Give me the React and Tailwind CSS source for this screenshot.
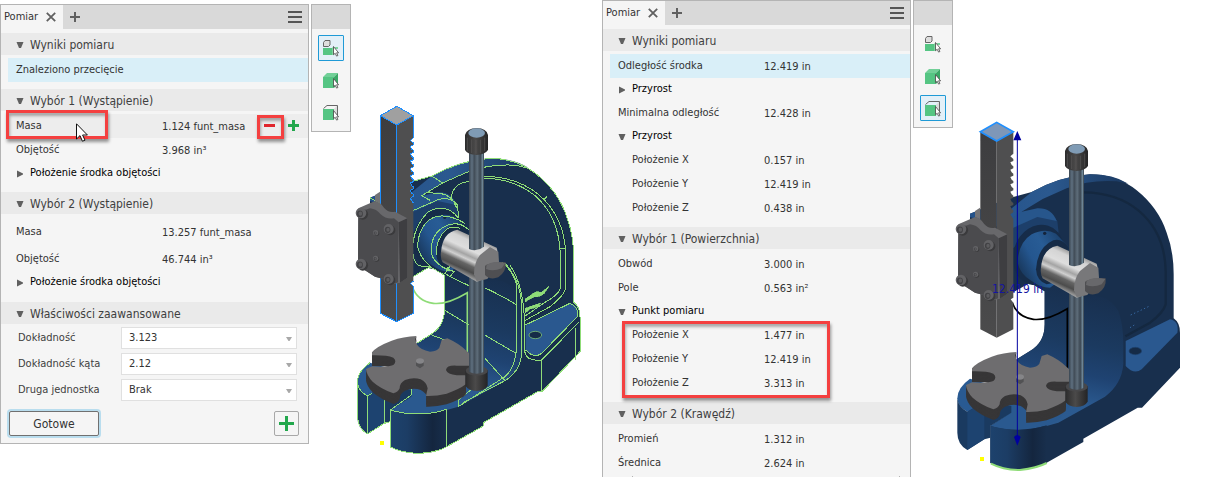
import clsx from 'clsx'

const EDGE = '#8fdc78'
const SELECT = '#1e8fff'

function Arrow({ open = true }) {
  return (
    <svg viewBox="0 0 8 8" className="h-2 w-2 shrink-0 fill-[#606060]" aria-hidden="true">
      <path d={open ? 'M0.5 1h7L5 7H3z' : 'M1 0.5L7 3.5v1L1 7.5z'} />
    </svg>
  )
}

function TabBar() {
  return (
    <div className="flex h-6 items-stretch bg-[#d9d9d9] text-[#333]">
      <div className="flex w-[62px] items-center justify-between bg-[#f5f5f5] pr-[7px] pl-[3px]">
        <button type="button" className="text-[11px]">Pomiar</button>
        <button type="button" aria-label="Zamknij">
          <svg viewBox="0 0 10 10" className="h-[10px] w-[10px] stroke-[#606060]" strokeWidth="1.8">
            <path d="M0.8 0.8l8.4 8.4M9.2 0.8L0.8 9.2" />
          </svg>
        </button>
      </div>
      <button type="button" aria-label="Dodaj" className="px-[7px]">
        <svg viewBox="0 0 10 10" className="h-[10px] w-[10px] fill-[#606060]">
          <path d="M4 0h2v4h4v2H6v4H4V6H0V4h4z" />
        </svg>
      </button>
      <button type="button" aria-label="Menu" className="ml-auto px-[6px]">
        <svg viewBox="0 0 14 12" className="h-3 w-[14px] fill-[#555]">
          <path d="M0 0h14v2H0zM0 5h14v2H0zM0 10h14v2H0z" />
        </svg>
      </button>
    </div>
  )
}

function Section({ title, className, children }) {
  return (
    <section>
      <h2>
        <button type="button" className="flex h-[22px] w-full items-center gap-[6px] bg-[#eaeaea] pt-[2px] pl-[15px] text-[12px] text-[#404040]">
          <Arrow />
          {title}
        </button>
      </h2>
      <div className={clsx('pt-[3px]', className)}>{children}</div>
    </section>
  )
}

function Row({ label, value, indent, className, children }) {
  return (
    <dl className={clsx('relative ml-[7px] flex h-6 items-center pl-2 text-[11px] text-[#333]', className)}>
      <dt className={clsx('w-[146px] shrink-0', indent && 'pl-[14px]')}>{label}</dt>
      <dd className="pt-[2px]">{value}</dd>
      {children}
    </dl>
  )
}

function Group({ label, open = false }) {
  return (
    <button type="button" aria-expanded={open} className="flex h-[23px] items-center gap-[6px] pl-[15px] text-[11px] text-black">
      <Arrow open={open} />
      {label}
    </button>
  )
}

function Field({ id, label, value }) {
  return (
    <div className="flex items-center pr-[11px] pl-[17px] text-[11px] text-[#404040]">
      <label htmlFor={id} className="w-[103px] shrink-0">{label}</label>
      <div className="relative flex-1">
        <select id={id} defaultValue={value} className="block h-[22px] w-full appearance-none border border-[#e0e0e0] bg-white px-[7px] text-[#333]">
          <option>{value}</option>
        </select>
        <svg viewBox="0 0 6 4" className="pointer-events-none absolute top-[10px] right-[5px] h-1 w-[6px] fill-[#a8a8a8]" aria-hidden="true">
          <path d="M0 0h6L3.5 4h-1z" />
        </svg>
      </div>
    </div>
  )
}

function Callout({ className }) {
  return <div className={clsx('pointer-events-none absolute border-[3px] border-[#f44040] shadow-[1px_3px_3px_rgba(0,0,0,0.4),inset_1px_3px_3px_rgba(0,0,0,0.3)]', className)} />
}

function PickCursor() {
  return <path d="M11.5 6.5v8.2l1.7-1.4 1.4 2.8 1.3-.6-1.3-2.7h2z" fill="#fff" stroke="#444" strokeWidth="0.8" />
}

function ComponentIcon() {
  return (
    <svg viewBox="1 0 17 17" className="h-[17px] w-[17px]">
      <path d="M1 8h9v7H1z" fill="#55c583" />
      <path d="M10 8l1-1h1v8h-2zM13 7h3v2h-3z" fill="#7fd3a0" />
      <path d="M1.5 6.5v-4l1.5-2h5v4.500l-1.500 1.500z" fill="#dedede" stroke="#666" />
      <PickCursor />
    </svg>
  )
}

function BodyIcon() {
  return (
    <svg viewBox="1 0 17 17" className="h-[17px] w-[17px]">
      <path d="M1 5h11v11H1z" fill="#55c583" />
      <path d="M1 5l4-4h11l-4 4z" fill="#72d098" />
      <path d="M12 5l4-4v10l-4 5z" fill="#3aa866" />
      <PickCursor />
    </svg>
  )
}

function FaceIcon() {
  return (
    <svg viewBox="1 0 17 17" className="h-[17px] w-[17px]">
      <path d="M12 5l3.500-4v10L12 15z" fill="#ddd" />
      <path d="M1.500 4.500l3.500-3h10.500v10" fill="none" stroke="#666" />
      <path d="M1 5h11v11H1z" fill="#55c583" />
      <PickCursor />
    </svg>
  )
}

const TOOLS = [
  { name: 'Komponent', Icon: ComponentIcon },
  { name: 'Bryła', Icon: BodyIcon },
  { name: 'Powierzchnia', Icon: FaceIcon },
]

function Toolbar({ active }) {
  return (
    <div className="ml-[2px] w-10 shrink-0 border border-[#b4b4b4] bg-[#f5f5f5]">
      <div className="h-6 bg-[#d9d9d9]" />
      <div className="flex flex-col items-center gap-[6px] py-[6px]">
        {TOOLS.map(({ name, Icon }, i) => (
          <button
            key={name}
            type="button"
            aria-label={name}
            aria-pressed={i === active}
            className={clsx(
              'flex h-[26px] w-[26px] items-center justify-center border',
              i === active ? 'rounded-[1px] border-[#1f9ad6] bg-[#e3f0f8]' : 'border-transparent'
            )}
          >
            <Icon />
          </button>
        ))}
      </div>
    </div>
  )
}

const TABLE = 'M66 772Q78 755 125 737Q160 725 200 723L195 731L200 748Q212 766 240 770Q262 768 268 758L275 735L292 730Q328 746 350 768L358 775V812H320Q290 810 288 825Q292 838 320 841H347V868Q330 882 290 896Q258 904 228 903L233 880Q230 862 212 853Q190 845 165 855Q149 864 149 880Q144 892 130 895Q90 880 68 860Q50 842 48 822L66 814Q110 818 130 810Q142 798 130 788Q110 780 66 781Z'
const TEETH = 'M190 62V128L181 136L190 144V150L181 154L185 162L190 166V172L181 176L185 184L190 188V194L181 198L185 206L190 210V216L181 220L185 228L190 232V238L181 242L185 250L190 254V260L181 264L185 272L190 276V282L181 286L185 294L190 298V304L181 310L190 324'

function Screw({ x, y, r }) {
  return (
    <g>
      <ellipse cx={x + r / 3} cy={y + r / 4} rx={r} ry={r} fill="#3a3a3c" />
      <ellipse cx={x} cy={y} rx={r} ry={r} fill="#626265" />
      <ellipse cx={x - r / 5} cy={y + r / 6} rx={r / 1.8} ry={r / 1.6} fill="#424245" />
      <ellipse cx={x - r / 8} cy={y + r / 8} rx={r / 3} ry={r / 2.5} fill="#5c5c5f" />
    </g>
  )
}

// Arbor press. Units are thirds of a pixel.
function Press({ id, originX, edges, measure }) {
  const fill = (name) => `url(#${id}-${name})`
  return (
    <svg viewBox={`${originX} 0 720 1080`} className="h-[360px] w-60 shrink-0" role="img" aria-label="Prasa ręczna">
      <defs>
        <linearGradient id={`${id}-post`}>
          <stop offset="0" stopColor="#3a4651" />
          <stop offset="0.2" stopColor="#5f7080" />
          <stop offset="0.35" stopColor="#414c57" />
          <stop offset="0.55" stopColor="#5e6d7a" />
          <stop offset="0.75" stopColor="#3b4651" />
          <stop offset="0.9" stopColor="#6c8494" />
          <stop offset="1" stopColor="#323c46" />
        </linearGradient>
        <linearGradient id={`${id}-knob`}>
          <stop offset="0" stopColor="#2b2b2c" />
          <stop offset="0.45" stopColor="#4b4a4a" />
          <stop offset="1" stopColor="#242425" />
        </linearGradient>
        <linearGradient id={`${id}-steel`} x1="0.65" y1="0.1" x2="0.25" y2="0.9">
          <stop offset="0.05" stopColor="#8d8d8d" />
          <stop offset="0.18" stopColor="#d4d4d4" />
          <stop offset="0.36" stopColor="#dedede" />
          <stop offset="0.48" stopColor="#a4a4a4" />
          <stop offset="0.56" stopColor="#d0d0d0" />
          <stop offset="0.66" stopColor="#656565" />
          <stop offset="0.78" stopColor="#4c4c4c" />
          <stop offset="0.92" stopColor="#b0b0b0" />
        </linearGradient>
        <linearGradient id={`${id}-rim`}>
          <stop offset="0" stopColor="#24528a" />
          <stop offset="0.5" stopColor="#2b598f" />
          <stop offset="1" stopColor="#1b3961" />
        </linearGradient>
        <linearGradient id={`${id}-boss`} x1="0" y1="0.8" x2="1" y2="0.2">
          <stop offset="0" stopColor="#16304f" />
          <stop offset="0.35" stopColor="#24568f" />
          <stop offset="0.6" stopColor="#285c95" />
          <stop offset="1" stopColor="#193b63" />
        </linearGradient>
        <linearGradient id={`${id}-wall`} x1="0.3" y1="0" x2="0.1" y2="1">
          <stop offset="0" stopColor="#182f4e" />
          <stop offset="0.35" stopColor="#1b3a60" />
          <stop offset="0.55" stopColor="#1f4372" />
          <stop offset="0.75" stopColor="#2b5a90" />
          <stop offset="1" stopColor="#2c5a8e" />
        </linearGradient>
        <linearGradient id={`${id}-front`}>
          <stop offset="0" stopColor="#1d426d" />
          <stop offset="0.3" stopColor="#1c3d65" />
          <stop offset="0.75" stopColor="#14263f" />
          <stop offset="1" stopColor="#182f4d" />
        </linearGradient>
        <linearGradient id={`${id}-left`} x1="0" y1="0" x2="0" y2="1">
          <stop offset="0" stopColor="#3d3d3f" />
          <stop offset="1" stopColor="#4b4b4c" />
        </linearGradient>
      </defs>

      {/* casting */}
      <path d="M60 308L175 262L245 243Q330 196 420 190Q500 190 560 238Q625 290 650 365Q671 420 671 490V622Q690 635 690 665V770L576 890H563L400 983V993L290 1055Q255 1075 200 1075Q155 1073 121 1056V945L184 905L200 745L240 720Q284 695 284 640V541L240 515L165 558L170 370L60 325Z" fill="#182f4d" />
      <path d="M175 300L245 243Q330 196 420 190Q490 190 535 218L500 211Q420 205 350 232L278 264L215 302L240 316L168 356L60 318V308L175 262Z" fill={fill('rim')} />
      <path d="M168 356L262 315Q300 302 322 330L326 365L288 350Q230 340 210 400L172 420Z" fill="#1d3f6a" />
      <path d="M165 340L215 302L262 292Q305 290 320 330L262 318L168 360Z" fill="#27568c" />
      <path d="M400 244Q500 245 565 298Q645 365 647 480V580Q640 605 600 635L526 676" fill="none" stroke="#142840" strokeWidth="7" />
      <path d="M284 541L240 515L262 500L400 560Q470 540 505 600Q520 640 520 700V760Q515 820 465 857L325 935L290 945L121 945L184 905L200 745L240 720Q284 695 284 640Z" fill={fill('wall')} />
      <path d="M121 945L182 904V880L375 866L325 925L290 943Q210 970 121 945Z" fill="#2a598f" />
      <path d="M121 945Q210 968 290 943V1055Q255 1075 200 1075Q155 1073 121 1056Z" fill={fill('front')} />
      <path d="M60 803Q22 830 22 862Q24 890 52 902L184 900V840Z" fill="#295a92" />
      <path d="M22 862Q26 890 52 902L103 872L184 885L184 905L121 945V980L103 985L52 1017Q22 1000 22 965Z" fill="#1a3a60" />
      <path d="M52 902L103 872V985L52 1017Z" fill="#1d4370" />
      <path d="M527 690L660 625Q688 630 682 665L575 775Q552 792 527 765Z" fill="#2a588f" />
      <ellipse cx="556" cy="720" rx="19" ry="11" fill="#152b47" stroke={edges ? EDGE : '#1e426e'} strokeWidth="2" />

      {/* boss */}
      <ellipse cx="266" cy="432" rx="76" ry="92" transform="rotate(18 266 432)" fill="#162c49" />
      <path d="M203 455Q205 395 245 370Q285 350 318 368L358 410L340 500L300 530Q270 530 245 510Q210 490 203 455Z" fill={fill('boss')} />
      <path d="M258 475Q262 410 310 388Q335 380 357 410L340 510L290 520Q260 510 258 475Z" fill="#162b46" />
      <circle cx="284" cy="367" r="5" fill="#15243a" />

      {edges && (
        <g fill="none" stroke={EDGE} strokeWidth="3" shapeRendering="crispEdges">
          <path d="M175 262L200 256L245 243Q330 196 420 190Q500 190 560 238Q625 290 650 365Q671 420 671 490V622Q690 635 690 665V770L576 890H563L400 983V993L290 1055Q255 1075 200 1075Q155 1073 121 1056V945Q210 970 290 943V1055" />
          <path d="M245 243L278 264L215 302L240 316M278 264L350 232Q420 205 500 211L535 220M60 308L90 325M168 356L262 315Q300 302 322 330L326 365M215 302L230 293L270 295Q308 300 320 340" />
          <path d="M303 310Q310 262 357 260M402 244Q500 245 565 298Q645 365 647 480V580Q640 605 600 635L526 676M402 250Q490 250 555 302Q628 365 631 480V580Q625 600 585 622L524 664M631 460H647M580 315L590 305" />
          <path d="M172 370V555L240 515L284 541V640Q284 695 240 720L200 745M284 646L357 690M245 720L285 735M188 470Q186 400 235 350Q290 322 326 370M203 455Q205 395 245 370Q285 350 345 385M244 475Q240 410 295 390Q330 378 357 405M258 480Q258 430 290 402Q310 392 330 400M188 470Q192 512 215 514H238M203 455Q212 492 240 512M244 475Q250 505 300 528M300 545L357 572" />
          <path d="M404 578Q470 610 500 630M404 720L498 775M455 500Q490 530 500 570V760Q495 820 465 845L325 935V915L375 875M465 505Q515 560 515 640V770Q515 825 465 857L340 922M480 510Q524 575 524 700V770Q530 800 575 795L688 680M405 790L465 857M575 795V890M675 700V795M526 690L660 625Q690 640 682 665L575 775Q552 792 527 765" />
          <path d="M60 803Q22 830 22 862V965Q25 1000 52 1017L103 985L121 980M22 862Q26 890 52 902V1017M52 902L66 896M103 880V985M184 880V900L121 945" />
          <path d="M290 520L312 530L300 545L285 535L300 515Z" />
        </g>
      )}
      {edges ? (
        <path d="M526 612L540 602L548 596L560 590L574 592L597 574L582 596L568 604L552 606L526 620ZM526 640L548 632L572 624L562 636L540 642L526 654Z" fill={EDGE} stroke={EDGE} strokeWidth="2" shapeRendering="crispEdges" />
      ) : (
        <path d="M540 650L556 640M542 612L568 600L597 586" fill="none" stroke="#3668a2" strokeWidth="3" strokeDasharray="4 7" />
      )}

      {/* gap arc */}
      <path d="M187 575Q202 618 250 625Q290 630 352 593V775" fill="none" stroke={edges ? EDGE : '#000'} strokeWidth="5" />

      {/* slotted table */}
      <g fill="#373637">
        {[32, 28, 24, 20, 16, 12, 8, 4].map((dy) => (
          <path key={dy} d={TABLE} transform={`translate(0 ${dy})`} />
        ))}
      </g>
      <path d={TABLE} fill="#6e6d6f" />
      <path d="M198 800V812L210 820L221 812V798Z" fill="#525254" />
      <ellipse cx="210" cy="798" rx="12" ry="8" fill="#858588" />

      {/* post and handle */}
      <path d="M357 165H402V835H357Z" fill={fill('post')} />
      <path d="M346 825V872Q355 886 380 888Q405 886 413 872V825Z" fill={fill('knob')} />
      <ellipse cx="380" cy="827" rx="33" ry="15" fill="#48484a" />
      <path d="M357 780H402V830Q380 842 357 830Z" fill={fill('post')} />
      <path d="M273 470Q278 412 322 404L440 458Q452 490 408 552L380 560L278 502Q270 490 273 470Z" fill={fill('steel')} />
      <path d="M390 480L420 456L445 470L447 500L412 552L380 558L372 538Q372 502 390 480Z" fill="#78787a" />
      <path d="M405 512Q425 500 467 502Q470 530 445 547Q420 556 405 540Z" fill="#4f4f52" />
      <path d="M410 510Q430 496 466 504L455 520Q430 530 408 522Z" fill="#68686b" />
      <path d="M357 165H402V455Q380 472 357 462Z" fill={fill('post')} />
      <path d="M345 120Q350 100 380 99Q410 100 414 120V165Q405 178 380 180Q352 178 345 165Z" fill={fill('knob')} />
      <ellipse cx="380" cy="114" rx="25" ry="14" fill="#7f9bb5" />
      <path d="M352 128V168M365 133V174M378 135V176M391 134V174M404 128V168" stroke="#5b5959" strokeWidth="2" />

      {/* rack */}
      <path d="M91 62L140 90V680L91 655Z" fill={fill('left')} />
      <path d={`${TEETH}V560L182 565L190 575V655L140 680V90Z`} fill="#4f4f50" />
      <path d="M91 62L140 34L190 62L140 90Z" fill={measure ? '#7e97b8' : '#a0a0a0'} />
      {edges && (
        <path d={`M91 655V62L140 34L190 62L140 90L91 62M140 90V680M91 655L140 680L190 655V575L182 565L190 558M190 62${TEETH.slice(7)}`} fill="none" stroke={SELECT} strokeWidth="3" shapeRendering="crispEdges" />
      )}
      {measure && <path d="M91 62L140 34L190 62L140 90Z" fill="none" stroke={SELECT} strokeWidth="5" />}

      {/* cover plate */}
      <path d="M75 300L90 290V325L75 318Z" fill="#737376" />
      <path d="M25 340L75 318Q90 320 102 338Q115 354 135 350L172 370V548L150 563L128 568L100 552L75 545L24 512Z" fill="#68686b" />
      <path d="M25 352L60 340Q80 342 92 358Q108 374 132 370L146 382L144 562L128 568L100 552L75 545L24 512Z" fill="#4b4b4e" />
      <path d="M146 382L172 370V548L150 563Z" fill="#3e3e41" />
      <Screw x={33} y={354} r={16} />
      <Screw x={116} y={402} r={15} />
      <Screw x={33} y={507} r={16} />
      <Screw x={116} y={552} r={15} />
      <Screw x={77} y={413} r={8} />
      <Screw x={77} y={490} r={8} />

      <path d="M90 1038h12v12H90z" fill="#ff0" />

      {measure && (
        <g>
          <path d="M123 1058Q160 1077 210 1077Q260 1072 290 1056" fill="none" stroke={EDGE} strokeWidth="6" />
          <path d="M202 70V990" stroke="#0000a0" strokeWidth="3" />
          <path d="M202 60L214 88H190ZM202 1004L192 978Q202 966 212 978Z" fill="#0000a0" />
          <text x="126" y="545" fontSize="36" fill="#1515a0">{measure}</text>
        </g>
      )}
    </svg>
  )
}

function LeftPanel() {
  return (
    <div className="min-w-0 flex-1 border border-[#b4b4b4] bg-[#f5f5f5]">
      <TabBar />
      <div className="pt-1">
        <Section title="Wyniki pomiaru" className="pb-[7px]">
          <p className="ml-[7px] flex h-6 items-center bg-[#d9eff8] pl-2 text-[11px] text-[#333]">Znaleziono przecięcie</p>
        </Section>
        <Section title="Wybór 1 (Wystąpienie)" className="pb-[7px]">
          <Row label="Masa" value="1.124 funt_masa" className="bg-[#ededed]">
            <button type="button" aria-label="Odejmij" className="absolute top-[10px] left-[256px]">
              <svg viewBox="0 0 11 3" className="h-[3px] w-[11px]"><path d="M0 0h11v3H0z" fill="#e0262d" /></svg>
            </button>
            <button type="button" aria-label="Dodaj" className="absolute top-[6px] left-[280px]">
              <svg viewBox="0 0 11 11" className="h-[11px] w-[11px]"><path d="M4 0h3v4h4v3H7v4H4V7H0V4h4z" fill="#22a74c" /></svg>
            </button>
            <Callout className="-top-1 -left-[2px] h-[29px] w-[102px]" />
            <Callout className="top-[1px] left-[249px] h-6 w-[27px]" />
            <svg viewBox="0 0 12 19" className="absolute top-[9px] left-[68px] h-[19px] w-3" aria-hidden="true">
              <path d="M0.5 0.8V16L4 12.6l2.4 5.6 2.6-1-2.4-5.2h4.8z" fill="#fff" stroke="#111" />
            </svg>
          </Row>
          <Row label="Objętość" value="3.968 in³" />
          <Group label="Położenie środka objętości" />
        </Section>
        <Section title="Wybór 2 (Wystąpienie)" className="pb-2">
          <div className="flex flex-col gap-[3px] pt-[3px]">
            <Row label="Masa" value="13.257 funt_masa" />
            <Row label="Objętość" value="46.744 in³" />
          </div>
          <Group label="Położenie środka objętości" />
        </Section>
        <Section title="Właściwości zaawansowane" className="flex flex-col gap-1">
          <Field id="precision" label="Dokładność" value="3.123" />
          <Field id="angle" label="Dokładność kąta" value="2.12" />
          <Field id="unit" label="Druga jednostka" value="Brak" />
        </Section>
        <div className="flex justify-between pt-[10px] pr-[9px] pb-[7px] pl-2">
          <button type="button" className="h-[25px] w-[90px] rounded-[2px] border border-[#707070] text-[12px] text-[#333] ring-2 ring-[#b9ddee]">Gotowe</button>
          <button type="button" aria-label="Dodaj pomiar" className="flex h-[25px] w-[25px] items-center justify-center rounded-[2px] border border-[#a8a8a8]">
            <svg viewBox="0 0 15 15" className="h-[15px] w-[15px]"><path d="M6 0h3v6h6v3H9v6H6V9H0V6h6z" fill="#22a74c" /></svg>
          </button>
        </div>
      </div>
    </div>
  )
}

function RightPanel() {
  return (
    <div className="min-w-0 flex-1 border border-b-0 border-[#b4b4b4] bg-[#f5f5f5]">
      <TabBar />
      <div className="pt-1">
        <Section title="Wyniki pomiaru" className="pb-[7px]">
          <Row label="Odległość środka" value="12.419 in" className="bg-[#d9eff8]" />
          <Group label="Przyrost" />
          <Row label="Minimalna odległość" value="12.428 in" />
          <Group label="Przyrost" open />
          <Row indent label="Położenie X" value="0.157 in" />
          <Row indent label="Położenie Y" value="12.419 in" />
          <Row indent label="Położenie Z" value="0.438 in" />
        </Section>
        <Section title="Wybór 1 (Powierzchnia)" className="pb-[7px]">
          <Row label="Obwód" value="3.000 in" />
          <Row label="Pole" value="0.563 in²" />
          <Group label="Punkt pomiaru" open />
          <div className="relative">
            <Row indent label="Położenie X" value="1.477 in" />
            <Row indent label="Położenie Y" value="12.419 in" />
            <Row indent label="Położenie Z" value="3.313 in" />
            <Callout className="-top-[2px] left-[19px] h-[77px] w-[208px]" />
          </div>
        </Section>
        <Section title="Wybór 2 (Krawędź)">
          <Row label="Promień" value="1.312 in" />
          <Row label="Średnica" value="2.624 in" />
        </Section>
        <div className="mt-px mr-[10px] ml-[29px] h-px border-x border-[#b4b4b4]" />
      </div>
    </div>
  )
}

export default function App() {
  return (
    <main className="grid grid-cols-[602fr_603fr] items-start bg-white font-['DejaVu_Sans_Condensed','Noto_Sans',sans-serif]">
      <div className="flex items-start pt-1 pr-[11px]">
        <LeftPanel />
        <Toolbar active={0} />
        <div className="pt-[91px]">
          <Press id="occurrence" originX={3} edges />
        </div>
      </div>
      <div className="flex items-start pr-3">
        <RightPanel />
        <Toolbar active={2} />
        <div className="pt-[111px]">
          <Press id="face" originX={9} measure="12.419 in" />
        </div>
      </div>
    </main>
  )
}
